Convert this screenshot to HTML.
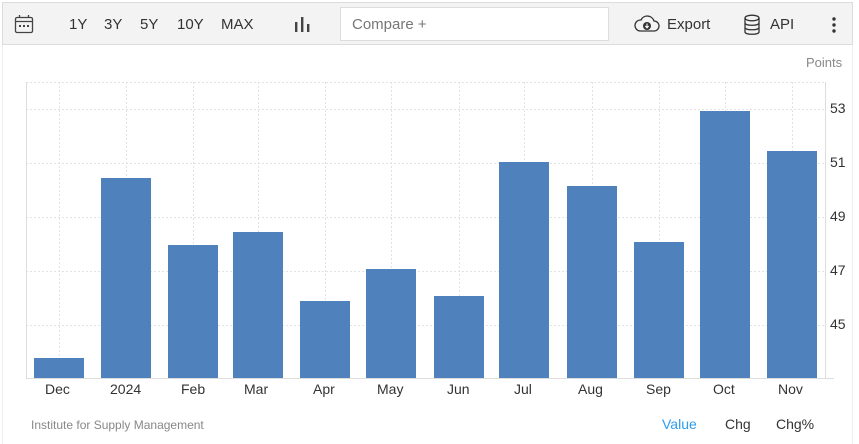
<!DOCTYPE html>
<html><head><meta charset="utf-8"><style>
body{margin:0;width:859px;height:444px;background:#fff;font-family:"Liberation Sans",Arial,sans-serif;position:relative;overflow:hidden}
.frame{position:absolute;left:2px;top:2px;width:849px;height:442px;border-left:1px solid #eee;border-right:1px solid #eee}
.tb{position:absolute;left:2px;top:2px;width:849px;height:41px;background:#f3f3f3;border:1px solid #dcdcdc}
.t{position:absolute;font-size:15px;color:#333;top:16px}
.cmp{position:absolute;left:340px;top:7px;width:269px;height:34px;background:#fff;border:1px solid #ddd;box-sizing:border-box}
.cmp span{position:absolute;left:11px;top:8px;font-size:15px;color:#777}
.lbl{position:absolute;font-size:14px;color:#333}
.bar{position:absolute;background:#4f81bd;width:50px}
</style></head><body>
<div class="frame"></div>
<div class="tb"></div>
<svg style="position:absolute;left:14px;top:14px" width="20" height="21" viewBox="0 0 20 21"><rect x="1.5" y="3.5" width="17" height="15" rx="1.5" fill="none" stroke="#444" stroke-width="1.3"/><line x1="1.5" y1="7.5" x2="18.5" y2="7.5" stroke="#444" stroke-width="1.3"/><line x1="5.5" y1="1" x2="5.5" y2="4" stroke="#444" stroke-width="1.3"/><line x1="14.5" y1="1" x2="14.5" y2="4" stroke="#444" stroke-width="1.3"/><rect x="5" y="11" width="2" height="2" fill="#444"/><rect x="9" y="11" width="2" height="2" fill="#444"/><rect x="13" y="11" width="2" height="2" fill="#444"/></svg>
<div class="t" style="left:69px">1Y</div>
<div class="t" style="left:104px">3Y</div>
<div class="t" style="left:140px">5Y</div>
<div class="t" style="left:177px">10Y</div>
<div class="t" style="left:221px">MAX</div>
<svg style="position:absolute;left:294px;top:16px" width="16" height="16"><rect x="1" y="6" width="2.4" height="10" fill="#444"/><rect x="7" y="1" width="2.4" height="15" fill="#444"/><rect x="13" y="8" width="2.4" height="8" fill="#444"/></svg>
<div class="cmp"><span>Compare +</span></div>
<svg style="position:absolute;left:634px;top:15px" width="26" height="18" viewBox="0 0 26 18"><path d="M6 16 H20 A5 5 0 0 0 20 6 A7 7 0 0 0 7 5 A5.5 5.5 0 0 0 6 16 Z" fill="none" stroke="#333" stroke-width="1.3"/><circle cx="13" cy="11" r="4" fill="#333"/><path d="M13 8.5 V12.5 M11.3 11 L13 12.8 L14.7 11" stroke="#fff" stroke-width="1.1" fill="none"/></svg>
<div class="t" style="left:667px">Export</div>
<svg style="position:absolute;left:743px;top:14px" width="18" height="22" viewBox="0 0 18 22"><ellipse cx="9" cy="4" rx="7" ry="2.8" fill="none" stroke="#333" stroke-width="1.3"/><path d="M2 4 V18 C2 21 16 21 16 18 V4 M2 9 C2 12 16 12 16 9 M2 13.5 C2 16.5 16 16.5 16 13.5" fill="none" stroke="#333" stroke-width="1.3"/></svg>
<div class="t" style="left:770px">API</div>
<svg style="position:absolute;left:832px;top:17px" width="4" height="16"><circle cx="2" cy="2" r="1.7" fill="#333"/><circle cx="2" cy="8" r="1.7" fill="#333"/><circle cx="2" cy="14" r="1.7" fill="#333"/></svg>
<div class="lbl" style="left:806px;top:55px;font-size:13px;color:#888">Points</div>
<svg style="position:absolute;left:0;top:0" width="859" height="444">
<g stroke="#e2e2e2" stroke-dasharray="2,2" stroke-width="1">
<line x1="26" y1="82.5" x2="825" y2="82.5"/><line x1="26" y1="109.5" x2="825" y2="109.5"/><line x1="26" y1="163.5" x2="825" y2="163.5"/><line x1="26" y1="217.5" x2="825" y2="217.5"/><line x1="26" y1="271.5" x2="825" y2="271.5"/><line x1="26" y1="325.5" x2="825" y2="325.5"/>
<line x1="59.5" y1="82" x2="59.5" y2="378"/><line x1="126.5" y1="82" x2="126.5" y2="378"/><line x1="193.5" y1="82" x2="193.5" y2="378"/><line x1="258.5" y1="82" x2="258.5" y2="378"/><line x1="325.5" y1="82" x2="325.5" y2="378"/><line x1="391.5" y1="82" x2="391.5" y2="378"/><line x1="459.5" y1="82" x2="459.5" y2="378"/><line x1="524.5" y1="82" x2="524.5" y2="378"/><line x1="592.5" y1="82" x2="592.5" y2="378"/><line x1="659.5" y1="82" x2="659.5" y2="378"/><line x1="725.5" y1="82" x2="725.5" y2="378"/><line x1="792.5" y1="82" x2="792.5" y2="378"/>
</g>
<line x1="26.5" y1="82" x2="26.5" y2="378" stroke="#ddd"/>
<line x1="825.5" y1="82" x2="825.5" y2="378" stroke="#ddd"/>
<line x1="26" y1="378.5" x2="834" y2="378.5" stroke="#ddd"/>
</svg>
<div class="bar" style="left:34px;top:358px;height:20px"></div>
<div class="bar" style="left:101px;top:178px;height:200px"></div>
<div class="bar" style="left:168px;top:245px;height:133px"></div>
<div class="bar" style="left:233px;top:232px;height:146px"></div>
<div class="bar" style="left:300px;top:301px;height:77px"></div>
<div class="bar" style="left:366px;top:269px;height:109px"></div>
<div class="bar" style="left:434px;top:296px;height:82px"></div>
<div class="bar" style="left:499px;top:162px;height:216px"></div>
<div class="bar" style="left:567px;top:186px;height:192px"></div>
<div class="bar" style="left:634px;top:242px;height:136px"></div>
<div class="bar" style="left:700px;top:111px;height:267px"></div>
<div class="bar" style="left:767px;top:151px;height:227px"></div>
<div class="lbl" style="left:830px;top:100px">53</div>
<div class="lbl" style="left:830px;top:154px">51</div>
<div class="lbl" style="left:830px;top:208px">49</div>
<div class="lbl" style="left:830px;top:262px">47</div>
<div class="lbl" style="left:830px;top:316px">45</div>
<div class="lbl" style="left:45px;top:381px">Dec</div>
<div class="lbl" style="left:110px;top:381px">2024</div>
<div class="lbl" style="left:181px;top:381px">Feb</div>
<div class="lbl" style="left:244px;top:381px">Mar</div>
<div class="lbl" style="left:313px;top:381px">Apr</div>
<div class="lbl" style="left:377px;top:381px">May</div>
<div class="lbl" style="left:447px;top:381px">Jun</div>
<div class="lbl" style="left:514px;top:381px">Jul</div>
<div class="lbl" style="left:578px;top:381px">Aug</div>
<div class="lbl" style="left:646px;top:381px">Sep</div>
<div class="lbl" style="left:713px;top:381px">Oct</div>
<div class="lbl" style="left:778px;top:381px">Nov</div>
<div class="lbl" style="left:31px;top:418px;font-size:12px;color:#888">Institute for Supply Management</div>
<div class="lbl" style="left:662px;top:416px;color:#2d9cf0">Value</div>
<div class="lbl" style="left:725px;top:416px">Chg</div>
<div class="lbl" style="left:776px;top:416px">Chg%</div>
</body></html>
